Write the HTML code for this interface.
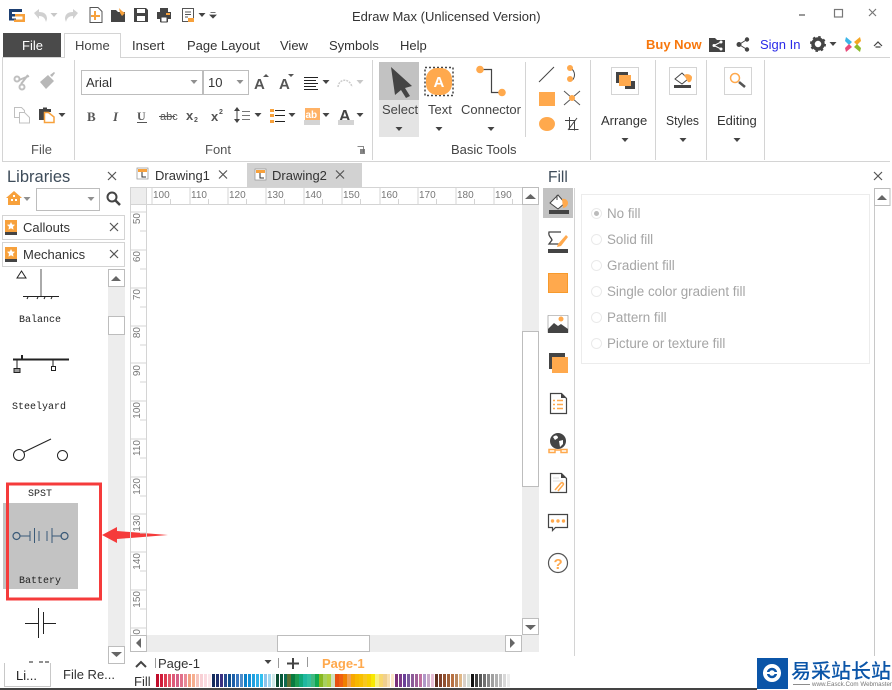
<!DOCTYPE html>
<html><head><meta charset="utf-8"><style>
html,body{margin:0;padding:0;background:#fff;width:892px;height:690px;overflow:hidden}
svg{position:absolute;left:0;top:0;font-family:"Liberation Sans","Noto Sans CJK SC",sans-serif}
text{fill:#333;font-size:13px}
.m{font-family:"Liberation Mono",monospace;font-size:10px;fill:#222}
.r{font-size:10px;fill:#777}
.f{fill:#a5a5a5;font-size:13.400px}
#p{position:absolute;left:156px;top:674px;height:13px;display:flex}
#p i{display:block;width:3.4px;margin-right:.6px;height:13px}
</style></head><body>
<svg width="892" height="690" viewBox="0 0 892 690">
<defs><g id="dr"><path d="M-3.5-2H3.500L0 2Z" fill="#444"/></g><g id="x"><path d="M-4-4L4 4M4-4L-4 4" stroke="#555" stroke-width="1.2" fill="none"/></g></defs>

<!-- title bar -->
<path d="M9 9h13v3h-10v2h7v2.500h-7v2h4v2h-7z" fill="#1d3f72"/><path d="M15 14h10v8h-11v-2.500h8.500v-3h-7.500z" fill="#f7a13c"/>
<path d="M34 13l5-4v3c5 0 8 2 8 7l-1 3c-1-4-3-6-7-6v3z" fill="#d0d0d0"/><use href="#dr" x="54" y="15" opacity=".3"/>
<path d="M78 13l-5-4v3c-5 0-8 2-8 7l1 3c1-4 3-6 7-6v3z" fill="#d0d0d0"/>
<path d="M90 7.500h8l4 4v11h-12z" fill="#fff" stroke="#555"/><path d="M95 11v9M91 16h9" stroke="#f7a13c" stroke-width="2"/>
<path d="M111 10h5l2 2h7v10h-14z" fill="#444"/><path d="M119 8l3 3 3 2-3 3-2-3z" fill="#f7a13c"/>
<path d="M134 8h12l2 2v12h-14z" fill="#444"/><rect x="137" y="9" width="8" height="4" fill="#fff"/><rect x="137" y="16" width="8" height="5" fill="#fff"/>
<path d="M160 8h8v4h-8zM157 12h14v7h-3v3h-8v-3h-3z" fill="#444"/><rect x="161" y="17" width="6" height="5" fill="#fff" stroke="#444"/><rect x="166" y="13" width="4" height="2" fill="#f7a13c"/>
<path d="M182.500 8.500h11v13h-11z" fill="#fff" stroke="#555"/><path d="M185 12h6M185 14.500h6M185 17h3" stroke="#555"/><path d="M188 18h6v4h-6z" fill="#f7a13c"/>
<use href="#dr" x="202" y="15"/><path d="M210.500 12.500h5M210 15h6l-3 3z" fill="#444" stroke="#444" stroke-width=".8"/>
<text x="352" y="21">Edraw Max (Unlicensed Version)</text>
<rect x="799" y="14" width="6" height="2" fill="#999"/><rect x="834.500" y="9.500" width="8" height="7.500" fill="none" stroke="#777" stroke-width="1.200"/>
<path d="M869 9l7 7M876 9l-7 7" stroke="#777" stroke-width="1.200"/>

<!-- menu -->
<rect x="3" y="33" width="58" height="24" fill="#4a4a4a"/><text x="22" y="50" style="fill:#fff">File</text>
<path d="M2.500 162V57.500H64.500V33.500H120.500V57.500H890" fill="none" stroke="#d4d4d4"/>
<text x="75" y="50" style="fill:#444">Home</text><text x="132" y="50">Insert</text><text x="187" y="50">Page Layout</text><text x="280" y="50">View</text><text x="329" y="50">Symbols</text><text x="400" y="50">Help</text>
<text x="646" y="49" style="fill:#f7770c;font-weight:bold">Buy Now</text>
<path d="M709 38h6l2 2h8v12h-16z" fill="#444"/><path d="M714 45.500l7-3.500M714 45.500l7 3.500" stroke="#fff"/><circle cx="714" cy="45.500" r="1.500" fill="#fff"/><circle cx="721" cy="42" r="1.500" fill="#fff"/><circle cx="721" cy="49" r="1.500" fill="#fff"/>
<path d="M739 44.500l8-5M739 44.500l8 5" stroke="#444"/><circle cx="739" cy="44.500" r="2.500" fill="#444"/><circle cx="747" cy="39.500" r="2.200" fill="#444"/><circle cx="747" cy="49.500" r="2.200" fill="#444"/>
<text x="760" y="49" style="fill:#2a2ae8">Sign In</text>
<circle cx="818" cy="44" r="5" fill="none" stroke="#444" stroke-width="3.500"/><circle cx="818" cy="44" r="7" fill="none" stroke="#444" stroke-width="2" stroke-dasharray="2.500 3"/>
<use href="#dr" x="833" y="44"/>
<path d="M846 37l6 5-3 3-4-4z" fill="#3bb5e8"/><path d="M860 37l-6 5 3 3 4-4z" fill="#f5a623"/><path d="M846 52l6-5-3-3-4 4z" fill="#e84a7a"/><path d="M860 52l-6-5 3-3 4 4z" fill="#8dbb2c"/>
<path d="M874 46l4-4 4 4M875.500 47h5" fill="none" stroke="#444" stroke-width="1.200"/>

<!-- ribbon frame -->
<path d="M2 161.500H890" stroke="#d4d4d4"/>
<path d="M74.500 60V160M372.500 60V160M590.500 60V160M655.500 60V160M706.500 60V160M764.500 60V160M525.500 62V137" stroke="#d4d4d4"/>

<!-- clipboard -->
<circle cx="17" cy="79" r="2.500" fill="none" stroke="#c0c0c0" stroke-width="2"/><circle cx="22" cy="87" r="2.500" fill="none" stroke="#c0c0c0" stroke-width="2"/><path d="M19 80l10-4M21 84l7-9" stroke="#bbb" stroke-width="2"/>
<path d="M40 82l8-7 6 6-8 8zM50 75l4-3 1 1-3 4z" fill="#b8b8b8"/>
<path d="M14.500 107.500h7l3 3v7h-10z" fill="#fff" stroke="#c0c0c0"/><path d="M19.500 112.500h5l5 5v5.500h-10z" fill="#fff" stroke="#c0c0c0"/>
<path d="M39 109h4v-1.500h4v1.500h4v3h-6v8h-6z" fill="#444"/><path d="M44.500 112.500h4l5.500 4.500v5.500h-9.500z" fill="#fff" stroke="#f7a13c" stroke-width="1.500"/>
<use href="#dr" x="62" y="115"/>
<text x="31" y="154" style="fill:#555">File</text>

<!-- font group -->
<rect x="81.500" y="70.500" width="121" height="24" fill="#fff" stroke="#bdbdbd"/><rect x="203.500" y="70.500" width="45" height="24" fill="#fff" stroke="#bdbdbd"/>
<text x="86" y="87">Arial</text><text x="208" y="87">10</text>
<use href="#dr" x="194" y="82" opacity=".6"/><use href="#dr" x="240" y="82" opacity=".6"/>
<text x="254" y="89" style="font-size:15px;font-weight:bold;fill:#555">A</text><path d="M263 77l3-3 3 3z" fill="#555"/>
<text x="279" y="89" style="font-size:15px;font-weight:bold;fill:#555">A</text><path d="M288 74h6l-3 3z" fill="#555"/>
<path d="M304 77.500h14M304 80.500h12M304 83.500h14M304 86.500h12M304 89.500h14" stroke="#222"/><use href="#dr" x="326" y="82"/>
<path d="M338 87c1-9 12-9 14 0" fill="none" stroke="#ccc" stroke-width="1.500" stroke-dasharray="2 1"/><use href="#dr" x="360" y="82" opacity=".3"/>
<text x="87" y="121" style="font-family:'Liberation Serif',serif;font-weight:bold;fill:#555;font-size:13px">B</text>
<text x="113" y="121" style="font-family:'Liberation Serif',serif;font-weight:bold;font-style:italic;fill:#555;font-size:13px">I</text>
<text x="137" y="120" style="font-family:'Liberation Serif',serif;font-weight:bold;fill:#555;font-size:12px">U</text><path d="M137 122.500h10" stroke="#555"/>
<text x="160" y="120" style="font-size:11px;fill:#555">abc</text><path d="M159 116.500h16" stroke="#555"/>
<text x="186" y="120" style="font-weight:bold;font-size:13px;fill:#555">x</text><text x="194" y="122" style="font-size:7px;font-weight:bold;fill:#555">2</text>
<text x="211" y="121" style="font-weight:bold;font-size:13px;fill:#555">x</text><text x="219" y="114" style="font-size:7px;font-weight:bold;fill:#555">2</text>
<path d="M237 108v14" stroke="#444"/><path d="M234 111l3-4 3 4zM234 119l3 4 3-4z" fill="#444"/><path d="M242 111.500h8M242 115.500h8M242 119.500h8" stroke="#777"/><use href="#dr" x="258" y="115"/>
<path d="M270 109h4v3h-4zM270 114h4v3h-4zM270 120h4v3h-4z" fill="#f7a13c"/><path d="M275 110.500h10M275 115.500h10M275 121.500h10" stroke="#222"/><use href="#dr" x="292" y="115"/>
<rect x="305" y="108" width="15" height="12" fill="#ffb266"/><text x="305.500" y="118" style="font-size:10px;fill:#fff;font-weight:bold">ab</text><rect x="304" y="120" width="16" height="5" fill="#d4d4d4"/><use href="#dr" x="326" y="115"/>
<text x="339" y="121" style="font-size:16px;font-weight:bold;fill:#444">A</text><rect x="338" y="120" width="16" height="5" fill="#d4d4d4"/><use href="#dr" x="360" y="115"/>
<text x="205" y="154" style="fill:#555">Font</text>
<path d="M357.500 146.500h6v6" fill="none" stroke="#888"/><path d="M360 149h5v5h-5z" fill="#666" opacity=".8"/>

<!-- basic tools -->
<rect x="379" y="62" width="40" height="38" fill="#c2c2c2"/><rect x="379" y="100" width="40" height="37" fill="#e4e4e4"/>
<path d="M391 67l21 19-7 2 5 8-4 2-5-8-6 5z" fill="#444"/>
<text x="382" y="114" style="fill:#444">Select</text><use href="#dr" x="399" y="129"/>
<rect x="425" y="67.500" width="28" height="28" fill="none" stroke="#444" stroke-width="1.500" stroke-dasharray="2 2"/><rect x="426" y="68" width="26" height="27" rx="11" fill="#ffa94d"/>
<text x="433.500" y="87" style="font-weight:bold;font-size:15px;fill:#fff">A</text>
<text x="428" y="114" style="fill:#444">Text</text><use href="#dr" x="439" y="129"/>
<path d="M480 69.500h11.500v23h10" fill="none" stroke="#444" stroke-width="1.200"/><circle cx="480" cy="69.500" r="3.800" fill="#ffa94d"/><circle cx="502" cy="92.500" r="3.800" fill="#ffa94d"/>
<text x="461" y="114" style="fill:#444">Connector</text><use href="#dr" x="491" y="129"/>
<text x="451" y="154" style="fill:#444">Basic Tools</text>
<path d="M539 82l15-15" stroke="#444"/>
<path d="M570 68c6 2 6 12 0 13" fill="none" stroke="#444"/><circle cx="570" cy="68" r="3" fill="#ffa94d"/><circle cx="570" cy="79" r="3" fill="#ffa94d"/>
<rect x="539" y="92" width="16" height="14" fill="#ffa94d"/>
<path d="M564 91l16 14M580 91l-16 14" stroke="#555"/><circle cx="572" cy="98" r="3" fill="#ffa94d"/>
<ellipse cx="547" cy="124" rx="8" ry="7" fill="#ffa94d"/>
<path d="M569.500 117v12.500h9M565 120.500h9.500v10M568 130l9-12" fill="none" stroke="#444"/>

<!-- large groups -->
<rect x="611.500" y="67.500" width="27" height="27" fill="#fff" stroke="#d4d4d4"/><rect x="616" y="72" width="12" height="11" fill="#444"/><rect x="625" y="81" width="10" height="8" fill="#444"/><rect x="619" y="75" width="12" height="11" fill="#ffa94d"/>
<text x="601" y="125">Arrange</text><use href="#dr" x="625" y="140"/>
<rect x="669.500" y="67.500" width="27" height="27" fill="#fff" stroke="#d4d4d4"/><path d="M675 79l7-6 6 6-6 5z" fill="#fff" stroke="#444"/><path d="M684 75c4-2 7 0 8 2 0 4-2 6-4 5z" fill="#ffa94d"/><rect x="674" y="85" width="17" height="3" fill="#444"/>
<text x="666" y="125" textLength="33" lengthAdjust="spacingAndGlyphs">Styles</text><use href="#dr" x="683" y="140"/>
<rect x="724.500" y="67.500" width="27" height="27" fill="#fff" stroke="#d4d4d4"/><circle cx="735" cy="78" r="4.500" fill="none" stroke="#ffa94d" stroke-width="1.500"/><path d="M739 82l6 5" stroke="#555" stroke-width="2.500"/>
<text x="717" y="125">Editing</text><use href="#dr" x="737" y="140"/>

<!-- left panel -->
<text x="7" y="182" style="font-size:16.500px;fill:#3e4c5a">Libraries</text><use href="#x" x="112" y="176"/>
<path d="M14 191l-8 7h2v7h12v-7h2z" fill="#f7a13c"/><path d="M11 199h2v2h-2zM15 199h2v2h-2zM13 195h2v2h-2z" fill="#fff"/><use href="#dr" x="27" y="199" opacity=".6"/>
<rect x="36.500" y="188.500" width="63" height="22" fill="#fff" stroke="#bdbdbd"/><use href="#dr" x="91" y="199" opacity=".6"/>
<circle cx="112" cy="197" r="4.500" fill="none" stroke="#444" stroke-width="2"/><path d="M115 200l5 5" stroke="#444" stroke-width="2.500"/>
<rect x="2.500" y="215.500" width="122" height="24" fill="#fff" stroke="#d4d4d4"/><rect x="2.500" y="242.500" width="122" height="24" fill="#fff" stroke="#d4d4d4"/>
<rect x="5" y="220" width="12" height="12" fill="#f7a13c"/><rect x="5" y="232" width="12" height="3" fill="#444"/><path d="M11 222l1.200 2.500 2.800.3-2 2 .5 2.800-2.500-1.300-2.500 1.300.5-2.800-2-2 2.800-.3z" fill="#fff"/>
<rect x="5" y="247" width="12" height="12" fill="#f7a13c"/><rect x="5" y="259" width="12" height="3" fill="#444"/><path d="M11 249l1.200 2.500 2.800.3-2 2 .5 2.800-2.500-1.300-2.500 1.300.5-2.800-2-2 2.800-.3z" fill="#fff"/>
<text x="23" y="232" style="fill:#333">Callouts</text><text x="23" y="259" style="fill:#333">Mechanics</text>
<use href="#x" x="114" y="227"/><use href="#x" x="114" y="254"/>

<!-- scrollbar left -->
<rect x="108" y="269" width="17" height="394" fill="#ededed"/>
<rect x="108.500" y="269.500" width="16" height="17" fill="#fff" stroke="#bdbdbd"/><path d="M111 281l5-5 5 5z" fill="#666"/>
<rect x="108.500" y="316.500" width="16" height="18" fill="#fff" stroke="#bdbdbd"/>
<rect x="108.500" y="646.500" width="16" height="17" fill="#fff" stroke="#bdbdbd"/><path d="M111 652h11l-5.500 5z" fill="#666"/>

<!-- shapes -->
<path d="M17 278l4.500-7 4.500 7z" fill="#fff" stroke="#222"/><path d="M41 269v27" stroke="#aaa" stroke-width="2"/><path d="M23 296.500h36" stroke="#222"/><path d="M28 297l-1 2M38 297l-1 2M45 297l-1 2M52 297l-1 2" stroke="#222"/>
<text x="19" y="322" class="m">Balance</text>
<path d="M13 359.500h56" stroke="#222" stroke-width="2"/><path d="M22 355v4" stroke="#222" stroke-width="2"/><path d="M17 360v9M53 360v8" stroke="#222"/><rect x="14" y="368.500" width="6" height="4" fill="#999" stroke="#222"/><rect x="51.500" y="366.500" width="4" height="4" fill="#fff" stroke="#222"/>
<text x="12" y="409" class="m">Steelyard</text>
<circle cx="19" cy="455" r="5.500" fill="#fff" stroke="#222"/><circle cx="62.500" cy="455.500" r="5" fill="#fff" stroke="#222"/><path d="M24 452l27-13" stroke="#222"/>
<text x="28" y="496" class="m">SPST</text>
<rect x="3" y="503" width="75" height="86" fill="#c3c3c3"/>
<path d="M20 536h10M30 531v10M34.500 528v15M39 531v10M47 531v10M52 528v15M52 536h10" stroke="#3a5a78" fill="none"/>
<circle cx="16.500" cy="536" r="3.500" fill="none" stroke="#3a5a78" stroke-width="1.200"/><circle cx="64.500" cy="536" r="3.500" fill="none" stroke="#3a5a78" stroke-width="1.200"/>
<text x="19" y="583" class="m">Battery</text>
<rect x="7.500" y="484" width="93" height="115" fill="none" stroke="#f53b3b" stroke-width="3"/>
<path d="M102 535L117 527V531L168 535L117 539V543Z" fill="#f53b3b"/>
<path d="M25 623.500h13M43 623.500h13M38.500 608v30M43.500 612v22" stroke="#222" fill="none"/>
<path d="M29 662h4M39 662h4M45 662h4" stroke="#222"/>

<!-- tabs -->
<rect x="247" y="163" width="115" height="24" fill="#d2d2d2"/>
<path d="M137 168h11v11h-11z" fill="#fff" stroke="#999" stroke-width=".8"/><rect x="138" y="169" width="9" height="3" fill="#f7a13c"/><path d="M142 172v5h4" fill="none" stroke="#333"/>
<path d="M255 169h11v11h-11z" fill="#fff" stroke="#999" stroke-width=".8"/><rect x="256" y="170" width="9" height="3" fill="#f7a13c"/><path d="M260 173v5h4" fill="none" stroke="#333"/>
<text x="155" y="180">Drawing1</text><use href="#x" x="223" y="174.500"/>
<text x="272" y="180">Drawing2</text><use href="#x" x="340" y="174.500"/>

<!-- rulers -->
<rect x="130" y="187" width="392" height="17.500" fill="#fff"/>
<rect x="130" y="187" width="17" height="18" fill="#ededed"/>
<path d="M130.500 187V652M146.500 187V635M130 187.500H522M130 204.500H522" stroke="#d4d4d4"/>
<path d="M152 188v16M170.500 199v5M190 188v16M208.500 199v5M228 188v16M246.500 199v5M266 188v16M284.500 199v5M304 188v16M322.500 199v5M342 188v16M360.500 199v5M380 188v16M398.500 199v5M418 188v16M436.500 199v5M456 188v16M474.500 199v5M494 188v16M512.500 199v5" stroke="#d4d4d4"/>
<path d="M131 212h16M140 231h6M131 250h16M140 269h6M131 288h16M140 307h6M131 326h16M140 345h6M131 363h16M140 382h6M131 401h16M140 420h6M131 439h16M140 458h6M131 477h16M140 496h6M131 514h16M140 533h6M131 552h16M140 571h6M131 590h16M140 609h6M131 628h16" stroke="#d4d4d4"/>
<g><text x="153" y="198" class="r">100</text><text x="191" y="198" class="r">110</text><text x="229" y="198" class="r">120</text><text x="267" y="198" class="r">130</text><text x="305" y="198" class="r">140</text><text x="343" y="198" class="r">150</text><text x="381" y="198" class="r">160</text><text x="419" y="198" class="r">170</text><text x="457" y="198" class="r">180</text><text x="495" y="198" class="r">190</text></g>
<g text-anchor="end">
<text class="r" transform="translate(140 213) rotate(-90)">50</text><text class="r" transform="translate(140 251) rotate(-90)">60</text><text class="r" transform="translate(140 289) rotate(-90)">70</text><text class="r" transform="translate(140 327) rotate(-90)">80</text><text class="r" transform="translate(140 365) rotate(-90)">90</text><text class="r" transform="translate(140 402) rotate(-90)">100</text><text class="r" transform="translate(140 440) rotate(-90)">110</text><text class="r" transform="translate(140 478) rotate(-90)">120</text><text class="r" transform="translate(140 515) rotate(-90)">130</text><text class="r" transform="translate(140 553) rotate(-90)">140</text><text class="r" transform="translate(140 591) rotate(-90)">150</text><text class="r" transform="translate(140 629) rotate(-90)">160</text></g>

<!-- canvas scrollbars -->
<rect x="522" y="187" width="17" height="465" fill="#ededed"/>
<rect x="130" y="635" width="409" height="17" fill="#ededed"/>
<rect x="522.500" y="187.500" width="16" height="17" fill="#fff" stroke="#bdbdbd"/><path d="M525 199l5.500-5 5.500 5z" fill="#666"/>
<rect x="522.500" y="331.500" width="16" height="155" fill="#fff" stroke="#bdbdbd"/>
<rect x="522.500" y="618.500" width="16" height="16" fill="#fff" stroke="#bdbdbd"/><path d="M525 625h11l-5.500 5z" fill="#666"/>
<rect x="130.500" y="635.500" width="16" height="16" fill="#fff" stroke="#bdbdbd"/><path d="M141 638v10l-5-5z" fill="#666"/>
<rect x="277.500" y="635.500" width="92" height="16" fill="#fff" stroke="#bdbdbd"/>
<rect x="505.500" y="635.500" width="16" height="16" fill="#fff" stroke="#bdbdbd"/><path d="M510 638v10l5-5z" fill="#666"/>

<!-- bottom -->
<path d="M4.500 663V686.500H50.500V663" fill="#fff" stroke="#c8c8c8"/>
<text x="16" y="680" style="fill:#222">Li...</text><text x="63" y="679" style="fill:#333">File Re...</text>
<path d="M136 667l5-5 5 5" fill="none" stroke="#444" stroke-width="2"/>
<text x="134" y="686" style="fill:#333">Fill</text>
<path d="M155.500 658v10M278.500 658v10M307.500 657v10" stroke="#999"/>
<text x="158" y="668" style="fill:#333">Page-1</text><use href="#dr" x="268" y="662"/>
<path d="M293 658v11M287 663.500h12" stroke="#444" stroke-width="2"/>
<text x="322" y="668" style="fill:#ffa94d;font-weight:bold">Page-1</text>
<rect x="0" y="688" width="757" height="2" fill="#444"/>

<!-- right panel -->
<text x="548" y="182" style="font-size:15.500px;fill:#3e4c5a">Fill</text><use href="#x" x="878" y="176"/>
<path d="M574.500 188V656" stroke="#d4d4d4"/>
<rect x="543" y="188" width="30" height="30" fill="#c2c2c2"/>
<path d="M550 203l8-8 7 8-7 6z" fill="#fff" stroke="#444"/><path d="M557 195v5" stroke="#444"/><path d="M562 199c3-1 6 1 6 4s-3 5-5 5z" fill="#ffa94d"/><rect x="549" y="210" width="20" height="4" fill="#444"/>
<path d="M561 232l-3 0-9 0c-1 4 2 5 3 8l-3 4h12" fill="none" stroke="#444" stroke-width="1.300"/><path d="M558 244l8-9 2 2-7 9-4 1z" fill="#ffa94d"/><rect x="548" y="249" width="20" height="4" fill="#444"/>
<rect x="548.500" y="273.500" width="19" height="19" fill="#ffa94d" stroke="#f79a2c"/>
<path d="M548 315.500h20v17h-20z" fill="#fff" stroke="#888" stroke-width=".6"/><path d="M548 329l6-6 4 3 3-2 7 5v4h-20z" fill="#444"/><circle cx="561" cy="319" r="2.500" fill="#ffa94d"/>
<rect x="549" y="353" width="16" height="16" fill="#444"/><rect x="552" y="357" width="16" height="16" fill="#ffa94d"/>
<path d="M550.500 393.500h11l5 5v15h-16z" fill="#fff" stroke="#444" stroke-width="1.200"/><path d="M561 393l5 5h-5z" fill="#444"/><path d="M553 400.500h2M557 400.500h6M553 404.500h2M557 404.500h6M553 408.500h2M557 408.500h6" stroke="#ffa94d" stroke-width="1.500"/>
<circle cx="558" cy="441" r="8" fill="#444"/><path d="M553 437c3-3 5-1 5 1l-3 2zM559 441l4-1 0 4-3 3z" fill="#fff"/><path d="M549 449.500h6v3h-6zM561 449.500h6v3h-6zM555 450h6" fill="none" stroke="#ffa94d" stroke-width="1.500"/>
<path d="M550.500 473.500h11l5 5v14h-16z" fill="#fff" stroke="#444" stroke-width="1.200"/><path d="M561 473l5 5h-5z" fill="#444"/><path d="M553 478h6M553 481h10" stroke="#ddd"/><path d="M555 490l6-7c2-1 3 1 2 2l-5 6" fill="none" stroke="#ffa94d" stroke-width="1.500"/>
<path d="M548.500 514.500h19v13h-12l-3 3v-3h-4z" fill="#fff" stroke="#444" stroke-width="1.200"/><circle cx="552.500" cy="521" r="1.700" fill="#ffa94d"/><circle cx="558" cy="521" r="1.700" fill="#ffa94d"/><circle cx="563.500" cy="521" r="1.700" fill="#ffa94d"/>
<circle cx="558" cy="563" r="9.500" fill="#fff" stroke="#555" stroke-width="1.200"/><text x="553.500" y="569" style="font-size:15px;font-weight:bold;fill:#ffa94d">?</text>
<rect x="581.500" y="194.500" width="288" height="169" fill="#fff" stroke="#ececec"/>
<g fill="#fff" stroke="#eaeaea"><circle cx="596.500" cy="213.500" r="5"/><circle cx="596.500" cy="239.500" r="5"/><circle cx="596.500" cy="265.500" r="5"/><circle cx="596.500" cy="291.500" r="5"/><circle cx="596.500" cy="317.500" r="5"/><circle cx="596.500" cy="343.500" r="5"/></g>
<circle cx="596.500" cy="213.500" r="2.500" fill="#bbb"/>
<text x="607" y="218" class="f">No fill</text><text x="607" y="244" class="f">Solid fill</text><text x="607" y="270" class="f">Gradient fill</text><text x="607" y="296" class="f">Single color gradient fill</text><text x="607" y="322" class="f">Pattern fill</text><text x="607" y="348" class="f">Picture or texture fill</text>
<!-- right panel scrollbar -->
<path d="M874.500 188V656" stroke="#c8c8c8"/>
<rect x="874.500" y="188.500" width="15.500" height="17" fill="#fff" stroke="#bdbdbd"/><path d="M877 200l5-5 5 5z" fill="#666"/>

<!-- logo -->
<rect x="757" y="658" width="135" height="32" fill="#fff"/>
<rect x="757" y="658" width="31" height="31" fill="#0b55a8"/><circle cx="772" cy="673" r="9" fill="#fff"/><circle cx="772" cy="673" r="4" fill="none" stroke="#0b55a8" stroke-width="2.500"/><path d="M763 673h18" stroke="#fff" stroke-width="2"/>
<text x="791" y="678" style="font-size:20px;fill:#0b55a8;font-weight:500">易采站长站</text>
<path d="M793 684.500h17" stroke="#666" stroke-width=".7"/><text x="812" y="686" textLength="80" lengthAdjust="spacingAndGlyphs" style="font-size:6.500px;fill:#777">www.Easck.Com Webmaster</text>
</svg>
<div id="p">
<i style="background:#c00d2b"></i><i style="background:#d01c3a"></i><i style="background:#dc3a50"></i><i style="background:#e4576a"></i><i style="background:#dd5a78"></i><i style="background:#d55f86"></i><i style="background:#e0718b"></i><i style="background:#ea8a97"></i><i style="background:#f2a080"></i><i style="background:#f6ae8e"></i><i style="background:#f7c4bd"></i><i style="background:#f8d0d5"></i><i style="background:#fbdae0"></i><i style="background:#fde6ea"></i>
<i style="background:#132a5c"></i><i style="background:#1c2e6c"></i><i style="background:#3a3080"></i><i style="background:#264a8c"></i><i style="background:#10508e"></i><i style="background:#1c5fa8"></i><i style="background:#3a78c0"></i><i style="background:#4f8cc8"></i><i style="background:#0a80c8"></i><i style="background:#1090d8"></i><i style="background:#20a0e0"></i><i style="background:#30b0e8"></i><i style="background:#30c0f0"></i><i style="background:#8cc4ec"></i><i style="background:#a0d8f0"></i><i style="background:#d0e8e8"></i>
<i style="background:#0a4a30"></i><i style="background:#085a3c"></i><i style="background:#0e6b50"></i><i style="background:#5a7030"></i><i style="background:#087a40"></i><i style="background:#1c9a50"></i><i style="background:#10a878"></i><i style="background:#20b8a0"></i><i style="background:#30c0a0"></i><i style="background:#40b880"></i><i style="background:#10a850"></i><i style="background:#88b820"></i><i style="background:#a8d060"></i><i style="background:#b0d040"></i><i style="background:#d0e0c0"></i>
<i style="background:#e85010"></i><i style="background:#f06010"></i><i style="background:#f08000"></i><i style="background:#f0a050"></i><i style="background:#f8a800"></i><i style="background:#f8b800"></i><i style="background:#f8c000"></i><i style="background:#f8c820"></i><i style="background:#f8d000"></i><i style="background:#f8e800"></i><i style="background:#f8f080"></i><i style="background:#f8d870"></i><i style="background:#f0d090"></i><i style="background:#f8e0b0"></i><i style="background:#fce8c8"></i>
<i style="background:#7a3078"></i><i style="background:#7c3a88"></i><i style="background:#6a4098"></i><i style="background:#7a5a9c"></i><i style="background:#8c5a98"></i><i style="background:#a06098"></i><i style="background:#c070a0"></i><i style="background:#b098c8"></i><i style="background:#c8a8c8"></i><i style="background:#e8c0d8"></i>
<i style="background:#603020"></i><i style="background:#804028"></i><i style="background:#905030"></i><i style="background:#a06038"></i><i style="background:#b87040"></i><i style="background:#b88860"></i><i style="background:#e0b888"></i><i style="background:#d8d0c8"></i><i style="background:#d8e0d8"></i>
<i style="background:#111"></i><i style="background:#404040"></i><i style="background:#585858"></i><i style="background:#707070"></i><i style="background:#888"></i><i style="background:#a0a0a0"></i><i style="background:#b0b0b0"></i><i style="background:#c0c0c0"></i><i style="background:#d8d8d8"></i><i style="background:#ececec"></i>
</div>
</body></html>
